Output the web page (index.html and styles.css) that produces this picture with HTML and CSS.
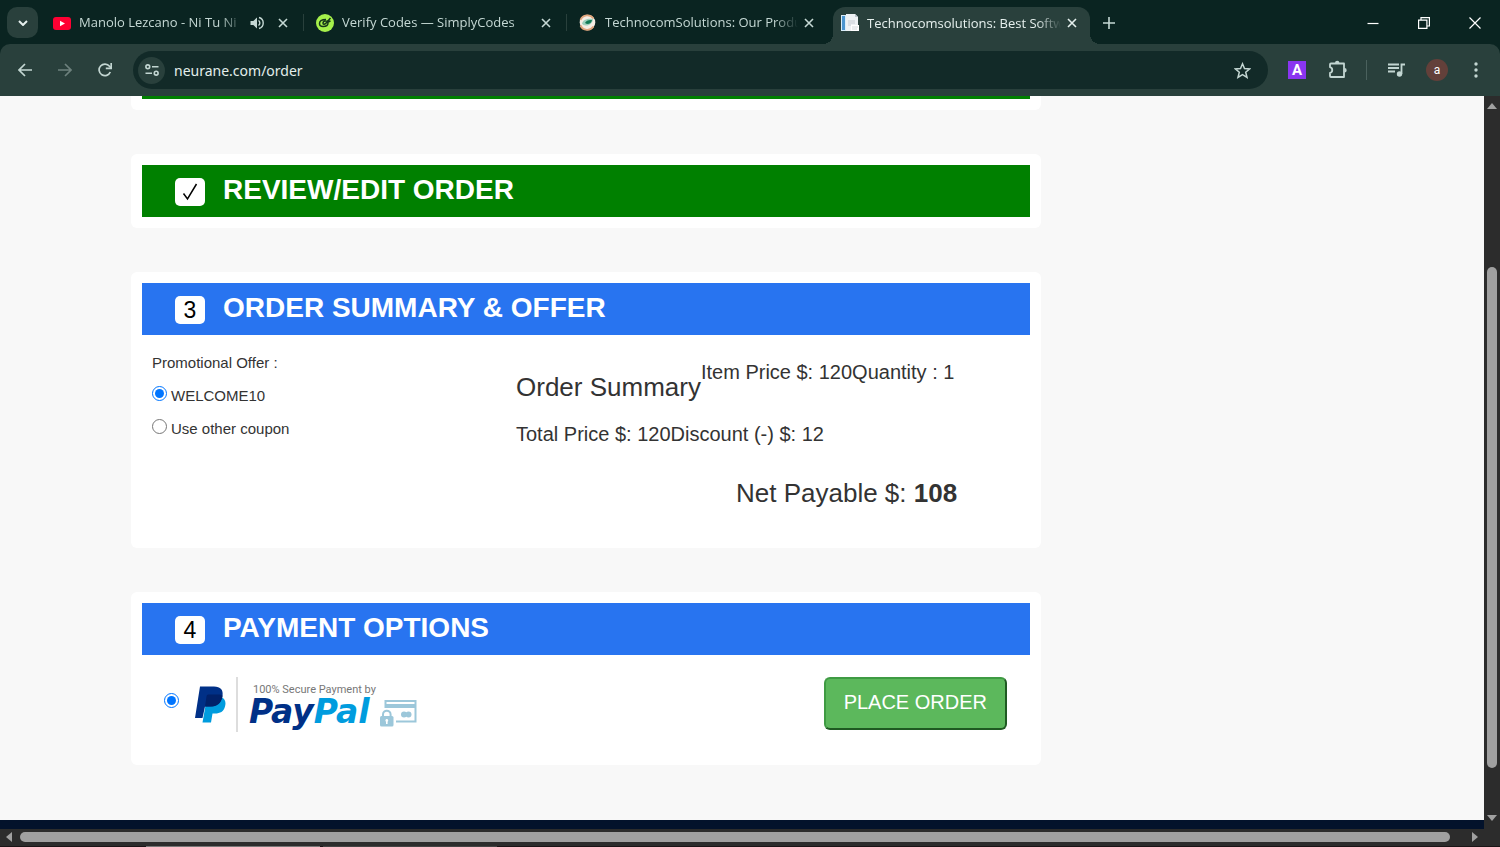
FILE: index.html
```html
<!DOCTYPE html>
<html lang="en">
<head>
    <meta charset="UTF-8">
    <meta name="viewport" content="width=device-width, initial-scale=1.0">
    <title>Technocomsolutions: Best Software</title>
    <link rel="stylesheet" href="styles.css">
</head>
<body>
    <header class="tab-strip">
        <button class="tab-search" aria-label="Search tabs">
            <svg width="10" height="6" viewBox="0 0 10 6"><path d="M1 1l4 4 4-4" fill="none" stroke="currentColor" stroke-width="2"/></svg>
        </button>

        <div class="tab">
            <svg class="favicon" viewBox="0 0 18 18"><rect y="3" width="18" height="13" rx="3" fill="#ff0033"/><path d="M7 6.700v5.600l5-2.800z" fill="#fff"/></svg>
            <span class="tab-title">Manolo Lezcano - Ni Tu Ni</span>
            <svg class="speaker" viewBox="0 0 14 14"><path d="M0.500 5v4h2.800L7 12.500v-11L3.300 5z" fill="currentColor"/><path d="M8.500 4.500a3 3 0 0 1 0 5M9 1.500a5.700 5.700 0 0 1 0 11" fill="none" stroke="currentColor" stroke-width="1.400"/></svg>
            <button class="tab-close" aria-label="Close tab"><svg width="10" height="10" viewBox="0 0 10 10"><path d="M1 1l8 8M9 1l-8 8" stroke="currentColor" stroke-width="1.600"/></svg></button>
        </div>

        <div class="tab">
            <svg class="favicon" viewBox="0 0 18 18"><circle cx="9" cy="9" r="9" fill="#a6f04b"/><path d="M10 5.500c-4 0-6.500 1.500-6.500 4 0 2 1.500 3 3.500 3 3 0 5-1.500 5-3.500 0-1.500-1-2-2.500-2S7 8 7 9.200s1.500 1.300 2.500.5L14.500 4M12 8l2.500-1" fill="none" stroke="#16351a" stroke-width="1.500"/></svg>
            <span class="tab-title">Verify Codes — SimplyCodes</span>
            <button class="tab-close" aria-label="Close tab"><svg width="10" height="10" viewBox="0 0 10 10"><path d="M1 1l8 8M9 1l-8 8" stroke="currentColor" stroke-width="1.600"/></svg></button>
        </div>

        <div class="tab">
            <svg class="favicon" viewBox="0 0 18 18"><circle cx="8.500" cy="8.500" r="7.800" fill="#f6ede4"/><path d="M1.500 6a7.500 7.500 0 0 1 13-1.500M1.500 11.500a7.500 7.500 0 0 0 13 1" fill="none" stroke="#e0a57c" stroke-width="1.800"/><path d="M3 9.500c1-4 6-5.500 11-4.500-.500 4-3 6.500-7 6.500-2 0-3.500-.700-4-2z" fill="#9ed0bd"/><path d="M6 9c1-2.500 4-3.500 7-3-.500 2.500-2 4-5 4z" fill="#147a55"/></svg>
            <span class="tab-title">TechnocomSolutions: Our Produ</span>
            <button class="tab-close" aria-label="Close tab"><svg width="10" height="10" viewBox="0 0 10 10"><path d="M1 1l8 8M9 1l-8 8" stroke="currentColor" stroke-width="1.600"/></svg></button>
        </div>

        <div class="tab active">
            <svg class="favicon" viewBox="0 0 18 18"><path d="M0 1h5v16H0z" fill="#d8ecfa"/><path d="M1 2h3v14H1z" fill="#4b94cf"/><path d="M5 0h9l3 3v14H5z" fill="#eef1f4"/><path d="M14 0l3 3h-3z" fill="#bcc5ce"/><path d="M7 7h7M7 9h7M7 11h3" stroke="#c6ccd3"/><path d="M10 11h8v6h-8z" fill="#fff"/><path d="M11 13h6M11 15h5" stroke="#d5dade"/></svg>
            <span class="tab-title">Technocomsolutions: Best Softw</span>
            <button class="tab-close" aria-label="Close tab"><svg width="10" height="10" viewBox="0 0 10 10"><path d="M1 1l8 8M9 1l-8 8" stroke="currentColor" stroke-width="1.600"/></svg></button>
        </div>

        <button class="new-tab" aria-label="New tab"><svg width="12" height="12" viewBox="0 0 12 12"><path d="M6 0v12M0 6h12" stroke="currentColor" stroke-width="1.600"/></svg></button>

        <div class="window-controls">
            <button aria-label="Minimize"><svg width="12" height="12" viewBox="0 0 12 12"><path d="M0.500 6.500h11" stroke="currentColor" stroke-width="1.200"/></svg></button>
            <button aria-label="Restore"><svg width="12" height="12" viewBox="0 0 12 12"><path d="M.600 3.100h8.300v8.300H.600zM3 3V.600h8.400V9H9" fill="none" stroke="currentColor" stroke-width="1.200"/></svg></button>
            <button aria-label="Close"><svg width="12" height="12" viewBox="0 0 12 12"><path d="M.500.500l11 11M11.500.500l-11 11" stroke="currentColor" stroke-width="1.200"/></svg></button>
        </div>
    </header>

    <nav class="toolbar">
        <div class="nav-buttons">
            <button aria-label="Back"><svg width="14" height="14" viewBox="0 0 14 14"><path d="M14 7H1.500M7 1L1 7l6 6" fill="none" stroke="currentColor" stroke-width="1.700"/></svg></button>
            <button class="dim" aria-label="Forward"><svg width="14" height="14" viewBox="0 0 14 14"><path d="M0 7h12.500M7 1l6 6-6 6" fill="none" stroke="currentColor" stroke-width="1.700"/></svg></button>
            <button aria-label="Reload"><svg width="14" height="14" viewBox="0 0 14 14"><path d="M12.300 9A5.800 5.800 0 1 1 11.500 3.300L13 5" fill="none" stroke="currentColor" stroke-width="1.700"/><path d="M13.200 0v5.400H7.800" fill="none" stroke="currentColor" stroke-width="1.700"/></svg></button>
        </div>

        <div class="address-bar">
            <button class="site-info" aria-label="Site information">
                <svg width="14" height="12" viewBox="0 0 14 12"><g fill="none" stroke="currentColor" stroke-width="1.600"><circle cx="2.800" cy="2.800" r="1.900"/><circle cx="11.200" cy="9.200" r="1.900"/><path d="M7 2.800h6.500M.500 9.200H7"/></g></svg>
            </button>
            <input class="url" type="text" value="neurane.com/order" aria-label="Address">
            <button class="bookmark" aria-label="Bookmark">
                <svg width="17" height="17" viewBox="0 0 17 17"><path d="M8.500 1.800l2 4.700 5.200.400-4 3.400 1.300 5-4.500-2.700L4 15.300l1.300-5-4-3.400 5.200-.400z" fill="none" stroke="currentColor" stroke-width="1.500"/></svg>
            </button>
        </div>

        <div class="extensions">
            <button class="ext-a" aria-label="Extension">A</button>
            <button aria-label="Extensions"><svg width="20" height="20" viewBox="0 0 20 20"><path d="M3 3.500h13v13.500H3q-1 0-1-1v-3c3-.500 3-5.300 0-5.800v-2.700q0-1 1-1z" fill="none" stroke="currentColor" stroke-width="1.800" stroke-linejoin="round"/><path d="M7 3a2.200 2.200 0 0 1 4.400 0zM16.500 8a2.200 2.200 0 0 1 0 4.400z" fill="currentColor"/></svg></button>
        </div>
        <div class="profile">
            <button aria-label="Media controls"><svg width="18" height="14" viewBox="0 0 18 14"><path d="M0 1.500h11M0 5h11M0 8.500h7" stroke="currentColor" stroke-width="1.800"/><path d="M13.500 11V1.500H17" fill="none" stroke="currentColor" stroke-width="1.800"/><circle cx="11.500" cy="11" r="2.700" fill="currentColor"/></svg></button>
            <button class="avatar" aria-label="Profile">a</button>
            <button aria-label="Menu"><svg width="4" height="16" viewBox="0 0 4 16" fill="currentColor"><circle cx="2" cy="2" r="1.700"/><circle cx="2" cy="8" r="1.700"/><circle cx="2" cy="14" r="1.700"/></svg></button>
        </div>
    </nav>

    <div class="viewport">
        <main class="page">
            <div class="steps">
                <section class="card card-scrolled">
                    <div class="banner done"></div>
                </section>

                <section class="card">
                    <h2 class="banner done">
                        <span class="step"><svg width="16" height="18" viewBox="0 0 16 18"><path d="M1.500 10.500L5.500 16 14.500 1" fill="none" stroke="#000" stroke-width="1.500"/></svg></span>
                        REVIEW/EDIT ORDER
                    </h2>
                </section>

                <section class="card">
                    <h2 class="banner"><span class="step">3</span>ORDER SUMMARY &amp; OFFER</h2>
                    <div class="summary">
                        <div class="offers">
                            <p>Promotional Offer :</p>
                            <label><input type="radio" name="offer" checked>WELCOME10</label>
                            <label><input type="radio" name="offer">Use other coupon</label>
                        </div>
                        <div class="totals">
                            <div class="totals-row">
                                <h3>Order Summary</h3>
                                <p>Item Price $: 120Quantity : 1</p>
                            </div>
                            <p>Total Price $: 120Discount (-) $: 12</p>
                            <p class="net">Net Payable $: <strong>108</strong></p>
                        </div>
                    </div>
                </section>

                <section class="card">
                    <h2 class="banner"><span class="step">4</span>PAYMENT OPTIONS</h2>
                    <div class="payment">
                        <label class="paypal">
                            <input type="radio" name="payment" checked>
                            <svg class="paypal-mark" width="31" height="37" viewBox="0 0 31 37">
                                <path d="M12 11h14c4 1.500 5.300 5 4 9.500-1.300 5-4.800 7-10 7h-2.500L16 36.500H7.500z" fill="#009cde"/>
                                <path d="M5 .500h14c6.500 0 9.500 3.500 8.500 9.500-1.200 7.500-5.500 10.500-12.500 10.500h-5L7.500 32H0z" fill="#003087"/>
                                <path d="M11.500 10.500c.200-1.500 1-2 2.500-2h9.500c1.500 0 3 .400 4 1.200-1 7.500-5.200 10.800-12.500 10.800h-5z" fill="#012169"/>
                            </svg>
                            <span class="paypal-brand">
                                <small>100% Secure Payment by</small>
                                <span class="wordmark">Pay<em>Pal</em></span>
                            </span>
                            <svg class="secure-card" width="37" height="27" viewBox="0 0 37 27">
                                <path d="M5.500 8V1h30v20.500H16" fill="none" stroke="#9cc7da" stroke-width="2"/>
                                <path d="M5 4h31v4H5z" fill="#9cc7da"/>
                                <circle cx="24" cy="14.500" r="3" fill="#9cc7da"/><circle cx="28.500" cy="14.500" r="3" fill="#9cc7da"/>
                                <path d="M3 16v-1.500a3.800 3.800 0 0 1 7.600 0V16" fill="none" stroke="#9cc7da" stroke-width="2"/>
                                <rect y="16" width="13.500" height="10.500" rx="1.500" fill="#9cc7da"/>
                                <path d="M6.800 19a1.500 1.500 0 0 1 .800 2.700V24H6v-2.300A1.500 1.500 0 0 1 6.800 19z" fill="#fff"/>
                            </svg>
                        </label>
                        <button class="place-order">PLACE ORDER</button>
                    </div>
                </section>
            </div>
            <footer class="page-footer"></footer>
        </main>

        <div class="scrollbar vertical">
            <svg width="10" height="6" viewBox="0 0 10 6"><path d="M0 6l5-6 5 6z" fill="#a0a0a0"/></svg>
            <div class="track"><div class="thumb"></div></div>
            <svg width="10" height="6" viewBox="0 0 10 6"><path d="M0 0l5 6 5-6z" fill="#a0a0a0"/></svg>
        </div>
    </div>

    <div class="scrollbar horizontal">
        <svg width="6" height="10" viewBox="0 0 6 10"><path d="M6 0L0 5l6 5z" fill="#a0a0a0"/></svg>
        <div class="track"><div class="thumb"></div></div>
        <svg width="6" height="10" viewBox="0 0 6 10"><path d="M0 0l6 5-6 5z" fill="#a0a0a0"/></svg>
    </div>
    <div class="taskbar-edge"><span></span><span></span></div>
</body>
</html>
```
FILE: styles.css
```css
* {
    margin: 0;
    padding: 0;
    box-sizing: border-box;
}

body {
    display: flex;
    flex-direction: column;
    height: 100vh;
    overflow: hidden;
    font-family: 'Liberation Sans', Arial, sans-serif;
    font-size: 15px;
    line-height: 21px;
    color: #333;
    background: #0a2421;
}

button {
    border: none;
    background: none;
    color: inherit;
    cursor: pointer;
    display: flex;
    align-items: center;
    justify-content: center;
    flex-shrink: 0;
}

svg {
    display: block;
    flex-shrink: 0;
}

/* Tabs */

.tab-strip {
    display: flex;
    align-items: center;
    height: 44px;
    flex-shrink: 0;
    padding: 1px 0 0 7px;
    color: #c5d8d4;
    font-family: 'Open Sans', 'Noto Sans', sans-serif;
    font-size: 13px;
}

.tab-search {
    width: 31px;
    height: 31px;
    margin-right: 3px;
    border-radius: 10px;
    background: #29403c;
    color: #e6f0ee;
}

.tab {
    display: flex;
    align-items: center;
    flex: 0 1 263px;
    min-width: 0;
    padding: 0 16px 0 12px;
    position: relative;
}

.tab:not(.active)::after {
    content: "";
    position: absolute;
    right: 0;
    width: 1px;
    height: 17px;
    background: #29403c;
}

.tab:nth-child(4)::after {
    display: none;
}

.favicon {
    width: 18px;
    height: 18px;
    margin-right: 8px;
}

.tab-title {
    flex: 1;
    min-width: 0;
    overflow: hidden;
    white-space: nowrap;
    margin-right: 6px;
    mask-image: linear-gradient(to right, #000 calc(100% - 24px), transparent);
}

.speaker {
    width: 14px;
    height: 14px;
    margin-right: 14px;
}

.tab.active {
    flex-basis: 257px;
    align-self: flex-end;
    height: 37px;
    margin: 0 3px;
    padding: 0 13px 5px 8px;
    border-radius: 12px 12px 0 0;
    background: #29403c;
    color: #e6f0ee;
}

.tab.active::before,
.tab.active::after {
    content: "";
    position: absolute;
    bottom: 0;
    width: 10px;
    height: 10px;
}

.tab.active::before {
    left: -10px;
    background: radial-gradient(circle at 0 0, transparent 10px, #29403c 10px);
}

.tab.active::after {
    right: -10px;
    background: radial-gradient(circle at 100% 0, transparent 10px, #29403c 10px);
}

.new-tab {
    width: 32px;
    height: 32px;
}

.window-controls {
    display: flex;
    margin-left: auto;
    color: #fff;
}

.window-controls button {
    width: 51px;
    height: 43px;
}

/* Toolbar */

.toolbar {
    display: flex;
    align-items: center;
    height: 52px;
    flex-shrink: 0;
    padding-right: 8px;
    border-radius: 10px 10px 0 0;
    background: #29403c;
    color: #c3d6d2;
}

.nav-buttons {
    display: flex;
    padding: 0 8px 0 5px;
}

.nav-buttons button {
    width: 40px;
    height: 40px;
}

.nav-buttons .dim {
    color: #6d817d;
}

.address-bar {
    display: flex;
    align-items: center;
    flex: 1;
    height: 38px;
    padding: 0 14px 0 5px;
    border-radius: 19px;
    background: #122a28;
}

.site-info {
    width: 27px;
    height: 27px;
    margin-right: 9px;
    border-radius: 50%;
    background: #29403c;
}

.url {
    flex: 1;
    min-width: 0;
    border: none;
    outline: none;
    background: none;
    color: #e3eeeb;
    font-family: 'Noto Sans', 'Open Sans', sans-serif;
    font-size: 14px;
}

.bookmark {
    width: 24px;
    height: 24px;
}

.extensions {
    display: flex;
    align-items: center;
    gap: 22px;
    padding: 0 18px 0 20px;
    border-right: 1px solid #4a615d;
}

.ext-a {
    width: 18px;
    height: 18px;
    background: #8a35f0;
    color: #fff;
    font-family: Roboto, sans-serif;
    font-size: 15px;
    font-weight: 700;
}

.profile {
    display: flex;
    align-items: center;
    gap: 20px;
    padding: 0 14px 0 21px;
}

.avatar {
    width: 22px;
    height: 22px;
    margin-right: 6px;
    border-radius: 50%;
    background: #63403a;
    color: #fff;
    font-family: Roboto, sans-serif;
    font-size: 12px;
}

/* Page */

.viewport {
    display: flex;
    flex: 1;
    min-height: 0;
}

.page {
    display: flex;
    flex-direction: column;
    flex: 1;
    background: #f8f8f8;
    overflow: hidden;
}

.steps {
    display: grid;
    gap: 44px;
    width: 61%;
    min-width: 910px;
    margin-left: 131px;
}

.card {
    padding: 11px;
    border-radius: 6px;
    background: #fff;
}

.card-scrolled {
    padding-top: 0;
    border-radius: 0 0 6px 6px;
}

.banner {
    display: flex;
    align-items: center;
    height: 52px;
    padding: 0 33px 2px;
    background: #2874f0;
    color: #fff;
    font-size: 28px;
    line-height: 48px;
    font-weight: bold;
}

.banner.done {
    background: #008000;
}

.card-scrolled .banner {
    height: 3px;
}

.step {
    display: flex;
    align-items: center;
    justify-content: center;
    width: 30px;
    height: 28px;
    margin: 4px 18px 0 0;
    border-radius: 5px;
    background: #fff;
    color: #000;
    font-size: 23px;
    line-height: 28px;
    font-weight: normal;
}

.summary {
    display: grid;
    grid-template-columns: 364px 1fr;
    padding: 17px 10px 10px;
}

.offers {
    display: flex;
    flex-direction: column;
    gap: 12px;
}

.offers label {
    display: flex;
    align-items: flex-start;
}

.offers input {
    width: 15px;
    height: 15px;
    margin: 1px 4px 0 0;
}

.totals {
    padding-top: 6px;
    font-size: 20px;
    line-height: 28px;
}

.totals-row {
    display: flex;
    margin-bottom: 19px;
}

.totals h3 {
    padding-top: 15px;
    font-size: 26px;
    font-weight: normal;
}

.net {
    margin: 31px 0 20px 220px;
    font-size: 26px;
}

.payment {
    display: flex;
    align-items: flex-start;
    justify-content: space-between;
    padding: 22px;
}

.paypal {
    display: flex;
    align-items: center;
    height: 55px;
}

.paypal input {
    width: 15px;
    height: 15px;
    margin: 0 16px 8px 0;
}

.paypal-brand {
    display: flex;
    flex-direction: column;
    height: 55px;
    margin-left: 10px;
    padding: 4px 0 0 11px;
    border-left: 2px solid #ddd;
}

.paypal-brand small {
    padding-left: 4px;
    color: #777;
    font-family: Roboto, sans-serif;
    font-size: 11px;
    line-height: 17px;
}

.wordmark {
    color: #003087;
    font-family: 'DejaVu Sans', sans-serif;
    font-size: 33px;
    line-height: 28px;
    font-weight: bold;
    font-style: italic;
}

.wordmark em {
    color: #009cde;
}

.secure-card {
    margin: 18px 0 0 4px;
}

.place-order {
    height: 53px;
    margin-right: 1px;
    padding: 0 18px 2px;
    border: 2px solid;
    border-color: #3f9b43 #1f5a22 #1f5a22 #3f9b43;
    border-radius: 6px;
    background: #5cb85c;
    color: #fff;
    font-family: inherit;
    font-size: 20px;
}

.page-footer {
    flex: 1;
    min-height: 9px;
    margin-top: 55px;
    background: #03122b;
}

/* Scrollbars */

.scrollbar {
    display: flex;
    align-items: center;
    flex-shrink: 0;
    background: #2c2c2c;
}

.track {
    display: grid;
    flex: 1;
}

.thumb {
    border-radius: 5px;
    background: #a0a0a0;
}

.vertical {
    flex-direction: column;
    width: 16px;
    padding: 7px 0 8px;
}

.vertical .track {
    grid-template-rows: 22% 72% 6%;
    width: 10px;
    margin: 5px 0;
}

.vertical .thumb {
    grid-row: 2;
}

.horizontal {
    height: 17px;
    padding: 0 22px 1px 6px;
}

.horizontal .track {
    grid-template-columns: 99% 1%;
    height: 10px;
    margin: 0 8px;
}

.taskbar-edge {
    display: flex;
    gap: 3px;
    height: 1px;
    flex-shrink: 0;
    padding-left: 146px;
    background: #1a1416;
}

.taskbar-edge span {
    width: 174px;
    background: #777;
}

.taskbar-edge span + span {
    background: #444;
}
```
